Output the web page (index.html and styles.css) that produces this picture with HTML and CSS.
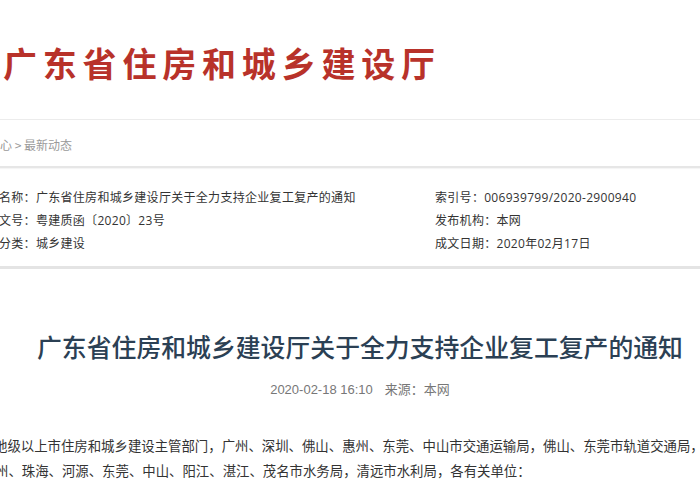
FILE: index.html
```html
<!DOCTYPE html>
<html lang="zh-CN">
<head>
<meta charset="utf-8">
<title>广东省住房和城乡建设厅</title>
<link rel="stylesheet" href="styles.css">
</head>
<body>
<header class="site-header">
  <h1 class="site-name">广东省住房和城乡建设厅</h1>
</header>
<nav class="crumbs"><span class="crumb-text">中心 &gt; 最新动态</span></nav>
<section class="meta">
  <div class="meta-col meta-left">
    <div class="meta-row">名称：广东省住房和城乡建设厅关于全力支持企业复工复产的通知</div>
    <div class="meta-row">文号：粤建质函〔2020〕23号</div>
    <div class="meta-row">分类：城乡建设</div>
  </div>
  <div class="meta-col meta-right">
    <div class="meta-row">索引号：006939799/2020-2900940</div>
    <div class="meta-row">发布机构：本网</div>
    <div class="meta-row">成文日期：2020年02月17日</div>
  </div>
</section>
<article class="article">
  <h2 class="article-title">广东省住房和城乡建设厅关于全力支持企业复工复产的通知</h2>
  <div class="article-info">2020-02-18 16:10<span class="source">来源：本网</span></div>
  <div class="article-body">
    <p class="line">地级以上市住房和城乡建设主管部门，广州、深圳、佛山、惠州、东莞、中山市交通运输局，佛山、东莞市轨道交通局，</p>
    <p class="line">州、珠海、河源、东莞、中山、阳江、湛江、茂名市水务局，清远市水利局，各有关单位：</p>
  </div>
</article>
</body>
</html>
```
FILE: styles.css
```css
html, body {
  margin: 0;
  padding: 0;
  background: #ffffff;
}
body {
  width: 700px;
  height: 500px;
  overflow: hidden;
  font-family: "Liberation Sans", "Noto Sans CJK SC", sans-serif;
  color: #333333;
}
.site-header {
  height: 120px;
  border-bottom: 1px solid #ececec;
  box-sizing: border-box;
  padding-top: 40px;
  padding-left: 3px;
}
.site-name {
  margin: 0;
  font-family: "Noto Sans CJK SC", sans-serif;
  font-weight: 700;
  font-size: 34px;
  line-height: 46px;
  letter-spacing: 5.8px;
  color: #b8322a;
  white-space: nowrap;
}
.crumbs {
  height: 48px;
  display: flex;
  align-items: center;
  padding-top: 2px;
  box-sizing: border-box;
  border-bottom: 2px solid #e6e6e6;
  box-shadow: 0 1px 1px rgba(0,0,0,0.04);
}
.crumb-text {
  margin-left: -12px;
  font-size: 12px;
  color: #9a9a9a;
  white-space: nowrap;
  font-family: "Noto Sans CJK SC", sans-serif;
}
.meta {
  display: flex;
  padding: 18px 0 11px;
  border-bottom: 3px solid #e4e4e4;
  font-size: 12px;
  letter-spacing: 0.3px;
  font-family: "Open Sans", "Noto Sans CJK SC", sans-serif;
  white-space: nowrap;
}
.meta-left {
  width: 436px;
  margin-left: -1px;
}
.meta-row {
  height: 23px;
  line-height: 23px;
  color: #333333;
}
.article {
  width: 720px;
  text-align: center;
}
.article-title {
  margin: 58px 0 0;
  font-family: "Noto Sans CJK SC", sans-serif;
  font-weight: 500;
  font-size: 24.85px;
  line-height: 38px;
  color: #2b4054;
  white-space: nowrap;
}
.article-info {
  margin-top: 16px;
  font-size: 13px;
  line-height: 18px;
  color: #777777;
}
.source {
  margin-left: 12px;
}
.article-body {
  margin-top: 34px;
  text-align: left;
  margin-left: -6px;
}
.line {
  margin: 0;
  height: 25px;
  font-size: 13.4px;
  line-height: 25px;
  color: #333333;
  white-space: nowrap;
  font-family: "Noto Sans CJK SC", sans-serif;
}
.line + .line {
  margin-left: 1px;
}
```
